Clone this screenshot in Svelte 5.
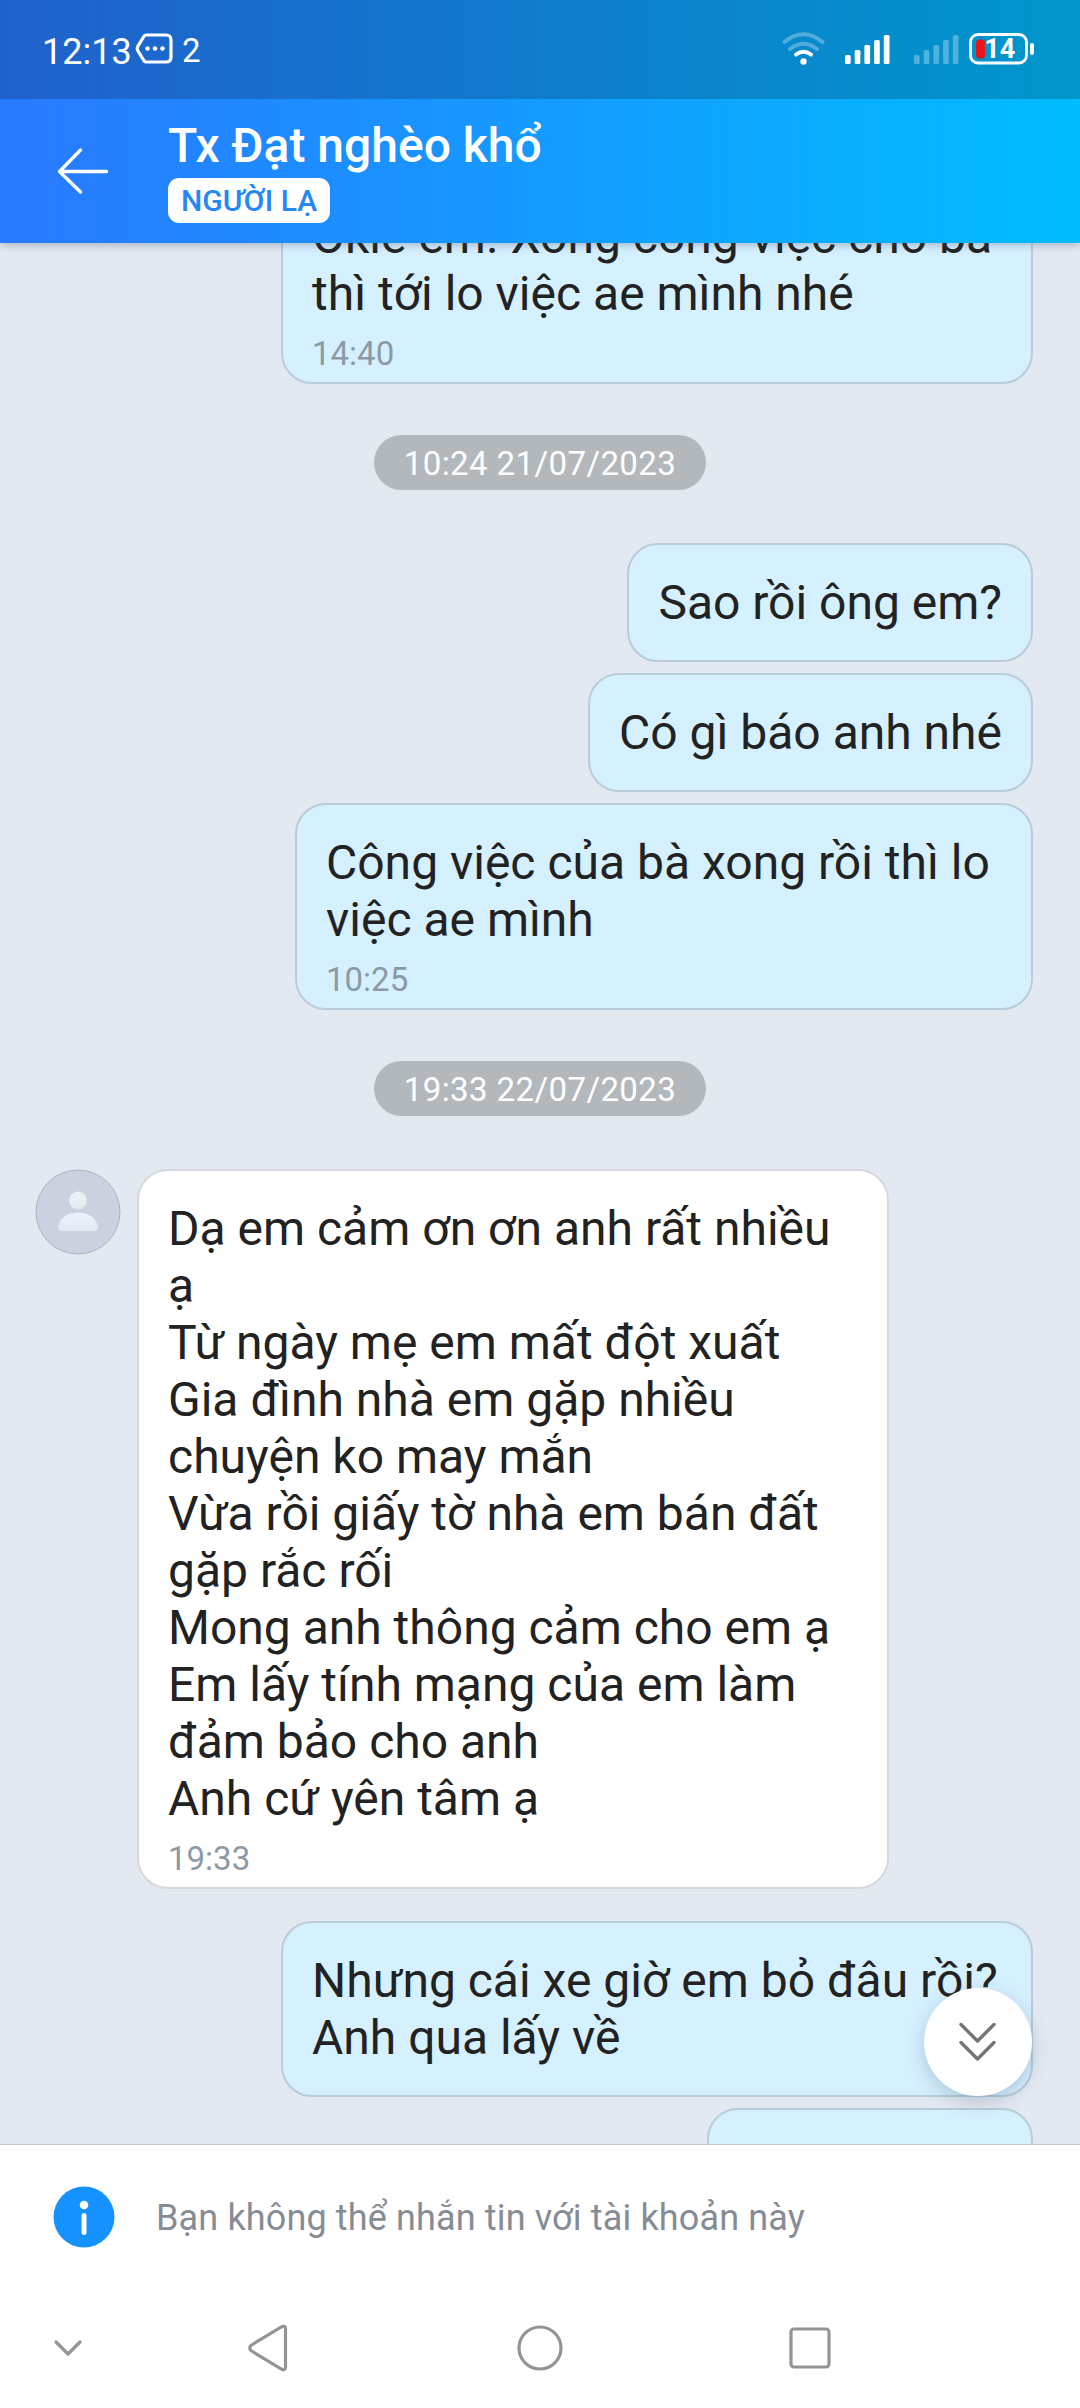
<script>
  const thread = [
    { kind: 'out', size: 'wide', lines: ['Okie em. Xong công việc cho bà', 'thì tới lo việc ae mình nhé'], time: '14:40' },
    { kind: 'date', text: '10:24 21/07/2023' },
    { kind: 'out', lines: ['Sao rồi ông em?'] },
    { kind: 'out', lines: ['Có gì báo anh nhé'] },
    { kind: 'out', size: 'medium', lines: ['Công việc của bà xong rồi thì lo', 'việc ae mình'], time: '10:25' },
    { kind: 'date', text: '19:33 22/07/2023' },
    {
      kind: 'in',
      size: 'wide',
      lines: [
        'Dạ em cảm ơn ơn anh rất nhiều',
        'ạ',
        'Từ ngày mẹ em mất đột xuất',
        'Gia đình nhà em gặp nhiều',
        'chuyện ko may mắn',
        'Vừa rồi giấy tờ nhà em bán đất',
        'gặp rắc rối',
        'Mong anh thông cảm cho em ạ',
        'Em lấy tính mạng của em làm',
        'đảm bảo cho anh',
        'Anh cứ yên tâm ạ'
      ],
      time: '19:33'
    },
    { kind: 'out', size: 'wide', lines: ['Nhưng cái xe giờ em bỏ đâu rồi?', 'Anh qua lấy về'] },
    { kind: 'out', size: 'small', lines: [' '] }
  ];
</script>

<div class="screen">
  <div class="top">
    <div class="status">
      <span class="clock">12:13</span>
      <svg class="msg" width="38" height="31" viewBox="0 0 38 31">
        <path d="M11 2H31Q36 2 36 7V24Q36 29 31 29H11Q9.500 29 8.500 27L3 18Q1.500 15.500 3 13L8.500 4Q9.500 2 11 2Z" fill="none" stroke="#fff" stroke-width="3.200" />
        <circle cx="12.500" cy="15.500" r="2.300" fill="#fff" />
        <circle cx="20" cy="15.500" r="2.300" fill="#fff" />
        <circle cx="27.500" cy="15.500" r="2.300" fill="#fff" />
      </svg>
      <span class="count">2</span>
      <div class="signals">
        <svg width="43" height="33" viewBox="0 0 43 33" fill="none" stroke="#fff" stroke-width="4" stroke-linecap="round">
          <path d="M2.500 10Q21.500 -5.500 40.500 10M8 17Q21.500 6.500 35 17" opacity=".3" />
          <path d="M14 22.500Q21.500 17 29 22.500" />
          <circle cx="21.500" cy="29.500" r="3.200" fill="#fff" stroke="none" />
        </svg>
        {#each [false, true] as dim}
          <svg class:dim class="bars" width="45" height="29" viewBox="0 0 45 29" fill="#fff">
            <rect x="0" y="20" width="5.700" height="9" rx="1.500" />
            <rect x="9.700" y="15" width="5.700" height="14" rx="1.500" />
            <rect x="19.400" y="10" width="5.700" height="19" rx="1.500" />
            <rect x="29.100" y="5" width="5.700" height="24" rx="1.500" />
            <rect x="38.800" y="0" width="5.700" height="29" rx="1.500" />
          </svg>
        {/each}
        <svg class="battery" width="66" height="32" viewBox="0 0 66 32">
          <rect x="1.500" y="1.500" width="56" height="28.500" rx="7.500" fill="none" stroke="#fff" stroke-width="2.800" />
          <rect x="61" y="10" width="4" height="12" rx="2" fill="#fff" />
          <rect x="7" y="6.500" width="9" height="19" rx="3.500" fill="#e8151b" />
          <text x="15.200" y="24.700" fill="#fff">14</text>
        </svg>
      </div>
    </div>
    <header>
      <svg class="back" width="52" height="48" viewBox="0 0 52 48" fill="none" stroke="#fff" stroke-width="3.400" stroke-linecap="round" stroke-linejoin="round">
        <path d="M49.500 24.500H3M23.500 3L2.500 24.500L23.500 45" />
      </svg>
      <div class="who">
        <h1>Tx Đạt nghèo khổ</h1>
        <span class="tag">NGƯỜI LẠ</span>
      </div>
    </header>
  </div>

  <main>
    {#each thread as item}
      {#if item.kind === 'date'}
        <div class="date">{item.text}</div>
      {:else}
        <div class="row {item.kind}">
          {#if item.kind === 'in'}
            <svg class="avatar" width="86" height="86" viewBox="0 0 86 86">
              <defs>
                <linearGradient id="person" x1="0" y1="0" x2="0" y2="1">
                  <stop offset="0" stop-color="#eef2fa" />
                  <stop offset="1" stop-color="#e3e9f3" />
                </linearGradient>
              </defs>
              <circle cx="43" cy="43" r="42" fill="#cbd1de" stroke="#adb4c1" />
              <circle cx="43" cy="31.500" r="9" fill="url(#person)" />
              <path d="M27 62Q23 62 23 57.500C25 48.500 33 43.500 43 43.500S61 48.500 63 57.500Q63 62 59 62Z" fill="url(#person)" />
            </svg>
          {/if}
          <div class="bubble {item.size ?? ''}">
            {#each item.lines as line}
              <p>{line}</p>
            {/each}
            {#if item.time}
              <time>{item.time}</time>
            {/if}
          </div>
        </div>
      {/if}
    {/each}
    <button class="jump" aria-label="Xuống cuối">
      <svg width="38" height="40" viewBox="0 0 38 40" fill="none" stroke="#757575" stroke-width="3.400" stroke-linecap="round" stroke-linejoin="round">
        <path d="M2 2.500L18.500 19L35 2.500M2 20.500L18.500 37L35 20.500" />
      </svg>
    </button>
  </main>

  <footer>
    <svg class="info" width="62" height="62" viewBox="0 0 62 62">
      <circle cx="31" cy="31" r="30.500" fill="#1592ff" />
      <circle cx="31" cy="19" r="4.300" fill="#fff" />
      <rect x="28.500" y="27" width="5" height="22" rx="2.500" fill="#fff" />
    </svg>
    <span>Bạn không thể nhắn tin với tài khoản này</span>
  </footer>

  <nav>
    <svg width="30" height="20" viewBox="0 0 30 20"><path d="M3 4L15 16L27 4" /></svg>
    <svg width="42" height="48" viewBox="0 0 42 48"><path d="M33.500 2.800Q37.500 1 37.500 5V43Q37.500 47 33.500 45.200L3.500 27Q0 24 3.500 21Z" /></svg>
    <svg width="46" height="46" viewBox="0 0 46 46"><circle cx="23" cy="23" r="21" /></svg>
    <svg width="42" height="42" viewBox="0 0 42 42"><rect x="2" y="2" width="38" height="38" rx="3" /></svg>
  </nav>
</div>

<style>
  :global(body) {
    margin: 0;
  }
  .screen {
    width: 1080px;
    height: 2408px;
    display: flex;
    flex-direction: column;
    overflow: hidden;
    background: #fff;
    font-family: Roboto, 'Liberation Sans', sans-serif;
  }
  svg {
    display: block;
    flex: none;
  }
  .top {
    position: relative;
    z-index: 1;
    height: 243px;
    flex: none;
    background: linear-gradient(90deg, #2979ff, #00bdff);
    box-shadow: 0 2px 8px rgba(60, 80, 110, 0.35);
    color: #fff;
  }
  .status {
    height: 99px;
    box-sizing: border-box;
    padding: 0 45px 0 42px;
    display: flex;
    align-items: flex-start;
    background: rgba(0, 0, 0, 0.2);
  }
  .clock {
    margin-top: 31px;
    width: 93px;
    font-size: 36px;
    line-height: 42px;
  }
  .msg {
    margin-top: 33px;
  }
  .count {
    margin: 31px 0 0 9px;
    font-size: 33px;
    line-height: 39px;
  }
  .signals {
    margin: 32px 0 0 auto;
    display: flex;
    align-items: flex-start;
  }
  .bars {
    margin: 3px 0 0 20px;
  }
  .bars.dim {
    margin-left: 24px;
    opacity: 0.3;
  }
  .battery {
    margin: 1px 0 0 10px;
  }
  .battery text {
    font-size: 27px;
    font-weight: 700;
  }
  header {
    height: 144px;
    display: flex;
  }
  .back {
    margin: 48px 0 0 57px;
  }
  .who {
    margin: 18px 0 0 59px;
  }
  h1 {
    margin: 0;
    font-size: 48px;
    font-weight: 500;
    line-height: 57px;
  }
  .tag {
    display: block;
    margin-top: 4px;
    width: 162px;
    height: 45px;
    border-radius: 11px;
    background: #fff;
    color: #2488f5;
    font-size: 30px;
    font-weight: 500;
    line-height: 46px;
    text-align: center;
  }
  main {
    position: relative;
    height: 1901px;
    flex: none;
    overflow: hidden;
    box-sizing: border-box;
    background: #e2e9f1;
    display: flex;
    flex-direction: column;
  }
  .row {
    display: flex;
    flex: none;
    align-items: flex-start;
    padding: 0 47px 0 35px;
  }
  .row:first-child {
    margin-top: -66px;
  }
  .row.out {
    justify-content: flex-end;
  }
  .row.out + .row.out {
    margin-top: 11px;
  }
  .row.in + .row.out {
    margin-top: 32px;
  }
  .avatar {
    margin-right: 16px;
  }
  .bubble {
    box-sizing: border-box;
    padding: 29px;
    border: 2px solid #b9ccd8;
    border-radius: 31px;
    background: #d5f0ff;
    color: #222;
    font-size: 48px;
    line-height: 57px;
  }
  .in .bubble {
    background: #fff;
    border-color: #d6d8db;
  }
  .wide {
    width: 752px;
  }
  .medium {
    width: 738px;
  }
  .small {
    width: 326px;
  }
  p {
    margin: 0;
    min-height: 57px;
    white-space: pre;
  }
  time {
    display: block;
    margin: 12px 0 -20px;
    font-size: 33px;
    line-height: 39px;
    color: #8c9aa5;
  }
  .date {
    flex: none;
    align-self: center;
    margin: 51px 0 53px;
    width: 332px;
    height: 55px;
    border-radius: 28px;
    background: #b3b8bd;
    color: #fff;
    font-size: 33px;
    letter-spacing: 0.4px;
    line-height: 58px;
    text-align: center;
  }
  .jump {
    position: absolute;
    right: 48px;
    bottom: 48px;
    width: 108px;
    height: 108px;
    padding: 0;
    border: 0;
    border-radius: 50%;
    background: #fff;
    box-shadow: 0 6px 18px rgba(60, 80, 120, 0.25);
    display: grid;
    place-items: center;
  }
  footer {
    height: 144px;
    flex: none;
    box-sizing: border-box;
    border-top: 1px solid #c4c8cc;
    padding-left: 53px;
    display: flex;
    align-items: center;
    gap: 41px;
    color: #858c94;
    font-size: 36px;
    letter-spacing: 0.14px;
  }
  footer span {
    padding-top: 2px;
  }
  nav {
    flex: 1;
    display: flex;
    align-items: center;
    padding-left: 53px;
    fill: none;
    stroke: #949494;
    stroke-width: 3.200;
    stroke-linecap: round;
    stroke-linejoin: round;
  }
  nav svg:nth-child(2) {
    margin-left: 165px;
  }
  nav svg:nth-child(3) {
    margin-left: 227px;
  }
  nav svg:nth-child(4) {
    margin-left: 226px;
  }
</style>
